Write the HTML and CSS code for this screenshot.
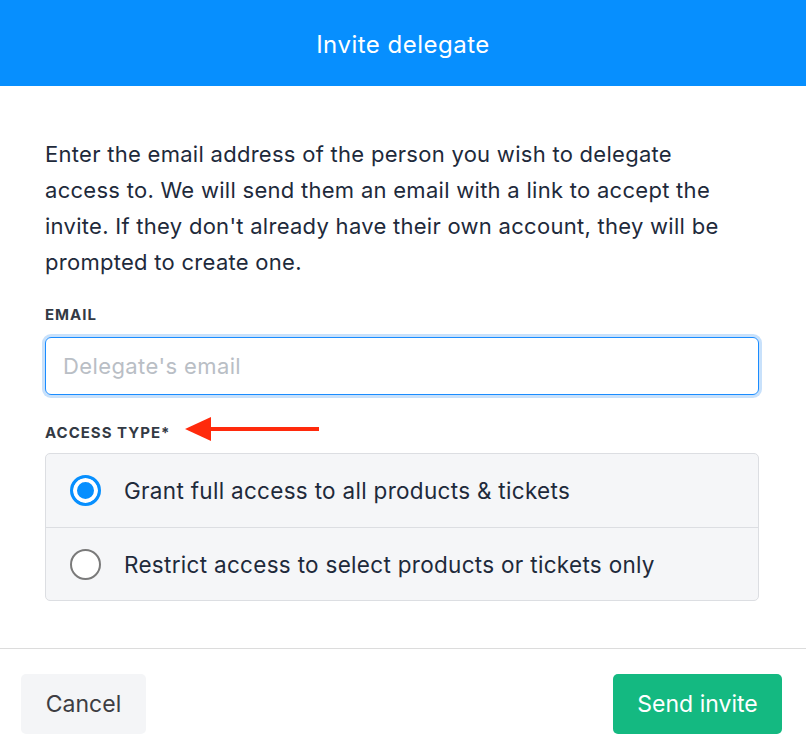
FILE: index.html
```html
<!DOCTYPE html>
<html>
<head>
<meta charset="utf-8">
<link rel="stylesheet" href="styles.css">
</head>
<body>
<div class="modal">
  <header class="modal-header">Invite delegate</header>
  <main class="modal-body">
    <p class="intro">Enter the email address of the person you wish to delegate access to. We will send them an email with a link to accept the invite. If they don't already have their own account, they will be prompted to create one.</p>
    <label class="field-label">EMAIL</label>
    <div class="input">Delegate's email</div>
    <div class="label-row">
      <label class="field-label">ACCESS TYPE*</label>
      <svg class="arrow" width="136" height="26" viewBox="0 0 136 26">
        <path d="M0 13 L26 1 L26 25 Z" fill="#ff2a0c"/>
        <rect x="24" y="11" width="110" height="4" fill="#ff2a0c"/>
      </svg>
    </div>
    <div class="options">
      <div class="option">
        <span class="radio checked"></span>
        <span>Grant full access to all products &amp; tickets</span>
      </div>
      <div class="option">
        <span class="radio"></span>
        <span>Restrict access to select products or tickets only</span>
      </div>
    </div>
  </main>
  <footer class="modal-footer">
    <button class="btn btn-cancel">Cancel</button>
    <button class="btn btn-send">Send invite</button>
  </footer>
</div>
</body>
</html>
```
FILE: styles.css
```css
* { box-sizing: border-box; }
html, body { margin: 0; padding: 0; background: #fff; }
body { font-family: Inter, "Noto Sans", sans-serif; color: #1f2937; }
.modal { width: 806px; height: 756px; display: flex; flex-direction: column; }
.modal-header {
  height: 86px; background: #078ffe; color: #fff;
  display: flex; align-items: center; justify-content: center;
  font-family: Inter, sans-serif; font-size: 24px; font-weight: 400;
  letter-spacing: 0.5px; padding-top: 2px;
}
.modal-body { padding: 50px 47px 0 45px; flex: 1; }
.intro {
  margin: 0; max-width: 692px; font-size: 22px; line-height: 36px;
  color: #1e2a3b; letter-spacing: 0.28px;
}
.field-label {
  display: block; font-size: 15px; font-weight: 700; letter-spacing: 1px; color: #333a44;
}
.modal-body > .field-label { margin-top: 25px; }
.input {
  margin-top: 13px; height: 58px; border: 1.5px solid #1a8cff; border-radius: 6px;
  box-shadow: 0 0 0 3px #c8e1fb; padding: 0 17px; display: flex; align-items: center;
  font-size: 22px; letter-spacing: 0.4px; color: #b9bec5;
}
.label-row { display: flex; align-items: center; margin-top: 27px; height: 20px; }
.arrow { margin-left: 15px; margin-top: -6px; }
.options {
  margin-top: 11px; border: 1px solid #dcdee2; border-radius: 5px; background: #f5f6f8;
}
.option {
  height: 73px; display: flex; align-items: center; padding-left: 24px;
  font-size: 22.5px; letter-spacing: 0.3px; color: #1e2a3b;
}
.option + .option { border-top: 1px solid #dcdee2; }
.radio {
  width: 31px; height: 31px; border-radius: 50%; border: 2.5px solid #7a7a7a;
  margin-right: 23px; flex: none; background: #fff;
}
.radio.checked {
  border: 3.5px solid #078ffe; background: #078ffe;
  box-shadow: inset 0 0 0 4px #fff;
}
.modal-footer {
  height: 108px; border-top: 1px solid #dcdcdc; display: flex;
  justify-content: space-between; align-items: center; padding: 0 24px 0 21px;
}
.btn {
  height: 60px; border: none; border-radius: 5px; font-family: Inter, sans-serif;
  font-size: 23px; padding: 0; margin-top: 2px;
}
.btn-cancel { background: #f4f5f7; color: #3d3d42; width: 125px; }
.btn-send { background: #14b981; color: #fff; width: 169px; }
```
